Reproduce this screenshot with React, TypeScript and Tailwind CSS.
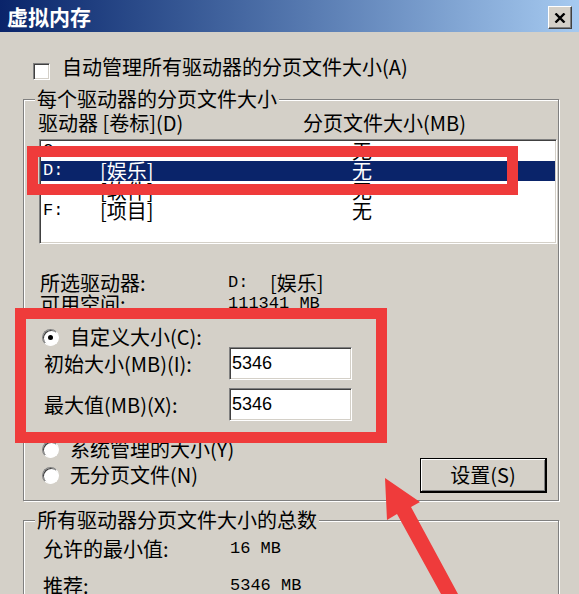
import React from "react";

const sunken =
  "bg-white border border-t-[#808080] border-l-[#808080] border-b-white border-r-white shadow-[inset_1px_1px_0_#404040,inset_-1px_-1px_0_#d4d0c8]";
const mono = "font-['Liberation_Mono',monospace]";

function Radio({ checked }: { checked?: boolean }) {
  return (
    <span className="w-[17px] h-[17px] shrink-0 rounded-full bg-white border border-t-[#808080] border-l-[#808080] border-b-white border-r-white shadow-[inset_1px_1px_0_#404040] flex items-center justify-center">
      {checked && <span className="w-[5px] h-[5px] rounded-full bg-black" />}
    </span>
  );
}

function Group({
  title,
  className = "",
  children,
}: {
  title: string;
  className?: string;
  children: React.ReactNode;
}) {
  return (
    <div
      className={`relative border border-[#808080] shadow-[1px_1px_0_#fff,inset_1px_1px_0_#fff] ${className}`}
    >
      <span className="absolute left-[11px] -top-[12px] px-[2px] bg-[#d4d0c8] leading-[22px]">
        {title}
      </span>
      {children}
    </div>
  );
}

const drives = [
  { drive: "C:", label: "", size: "无" },
  { drive: "D:", label: "[娱乐]", size: "无", selected: true },
  { drive: "E:", label: "[软件]", size: "无" },
  { drive: "F:", label: "[项目]", size: "无" },
];

export default function App() {
  return (
    <div className="relative w-[579px] h-[594px] overflow-hidden bg-[#d4d0c8] text-black text-[20px] font-['Noto_Sans_CJK_SC',sans-serif]">
      {/* title bar */}
      <div className="h-[32px] flex items-start justify-between bg-linear-to-r from-[#0a246a] to-[#a6caf0]">
        <span className="pl-[7px] leading-[32px] text-[21px] font-bold text-white">
          虚拟内存
        </span>
        <button className="mt-[6px] mr-[7px] w-[24px] h-[23px] flex items-center justify-center bg-[#d4d0c8] border border-t-white border-l-white border-b-[#404040] border-r-[#404040] shadow-[inset_-1px_-1px_0_#808080]">
          <svg width="12" height="10" viewBox="0 0 12 10">
            <path d="M1.5 0.5 L10.5 9.5 M10.5 0.5 L1.5 9.5" stroke="#000" strokeWidth="2.4" />
          </svg>
        </button>
      </div>

      <div className="pl-[23px] pr-[20px]">
        {/* auto manage checkbox */}
        <div className="mt-[24px] flex items-start">
          <span className={`ml-[10px] mt-[7px] w-[17px] h-[17px] ${sunken}`} />
          <span className="ml-[12px] leading-[22px]">自动管理所有驱动器的分页文件大小(A)</span>
        </div>

        <Group title="每个驱动器的分页文件大小" className="mt-[19px] pt-[12px] pb-[7px]">
          <div className="flex pl-[14px] leading-[22px]">
            <span className="w-[265px]">驱动器 [卷标](D)</span>
            <span>分页文件大小(MB)</span>
          </div>

          <div className={`mt-[5px] ml-[15px] mr-[1px] h-[105px] p-[1px] ${sunken}`}>
            {drives.map((d) => (
              <div
                key={d.drive}
                className={`h-[20px] flex items-center pl-[2px] leading-[20px] ${
                  d.selected ? "bg-[#0a246a] text-white" : ""
                }`}
              >
                <span className={`w-[57px] text-[17px] ${mono}`}>{d.drive}</span>
                <span className="w-[252px]">{d.label}</span>
                <span>{d.size}</span>
              </div>
            ))}
          </div>

          <div className="mt-[28px] pl-[16px] leading-[21px]">
            <div className="flex">
              <span className="w-[188px]">所选驱动器:</span>
              <span className={`w-[42px] text-[17px] ${mono}`}>D:</span>
              <span>[娱乐]</span>
            </div>
            <div className="flex">
              <span className="w-[188px]">可用空间:</span>
              <span className={`text-[17px] ${mono}`}>111341 MB</span>
            </div>
          </div>

          <div className="mt-[13px] pl-[18px] h-[20px] flex items-center gap-[11px] leading-[20px]">
            <Radio checked />
            <span>自定义大小(C):</span>
          </div>

          <div className="pl-[20px] flex items-center">
            <span className="w-[185px]">初始大小(MB)(I):</span>
            <div className={`w-[123px] h-[33px] pl-[2px] flex items-center text-[18px] font-['Liberation_Sans',sans-serif] ${sunken}`}>
              5346
            </div>
          </div>
          <div className="mt-[8px] pl-[20px] flex items-center">
            <span className="w-[185px]">最大值(MB)(X):</span>
            <div className={`w-[123px] h-[33px] pl-[2px] flex items-center text-[18px] font-['Liberation_Sans',sans-serif] ${sunken}`}>
              5346
            </div>
          </div>

          <div className="mt-[17px] flex justify-between items-start">
            <div className="pl-[18px] flex flex-col gap-[4px] leading-[22px]">
              <div className="flex items-center gap-[11px]">
                <Radio />
                <span>系统管理的大小(Y)</span>
              </div>
              <div className="flex items-center gap-[11px]">
                <Radio />
                <span>无分页文件(N)</span>
              </div>
            </div>
            <button className="mt-[20px] mr-[11px] w-[127px] h-[35px] bg-[#d4d0c8] border border-black border-b-2 border-r-2 shadow-[inset_1px_1px_0_#fff,inset_-1px_-1px_0_#808080] leading-[22px]">
              设置(S)
            </button>
          </div>
        </Group>

        <Group title="所有驱动器分页文件大小的总数" className="mt-[19px] pt-[17px] pb-[20px]">
          <div className="pl-[19px] leading-[22px]">
            <div className="flex">
              <span className="w-[187px]">允许的最小值:</span>
              <span className={`text-[17px] ${mono}`}>16 MB</span>
            </div>
            <div className="mt-[15px] flex">
              <span className="w-[187px]">推荐:</span>
              <span className={`text-[17px] ${mono}`}>5346 MB</span>
            </div>
          </div>
        </Group>
      </div>

      {/* red annotations */}
      <div className="absolute left-[27px] top-[146px] w-[491px] h-[49px] border-[11px] border-[#ef3b3b]" />
      <div className="absolute left-[15px] top-[308px] w-[372px] h-[135px] border-[11px] border-[#ef3b3b]" />
      <svg className="absolute left-0 top-0 pointer-events-none" width="579" height="594" viewBox="0 0 579 594">
        <polygon
          points="385,478 420,502 411,507 458,594 441,594 397,514 387,520"
          fill="#ef3b3b"
        />
      </svg>
    </div>
  );
}
